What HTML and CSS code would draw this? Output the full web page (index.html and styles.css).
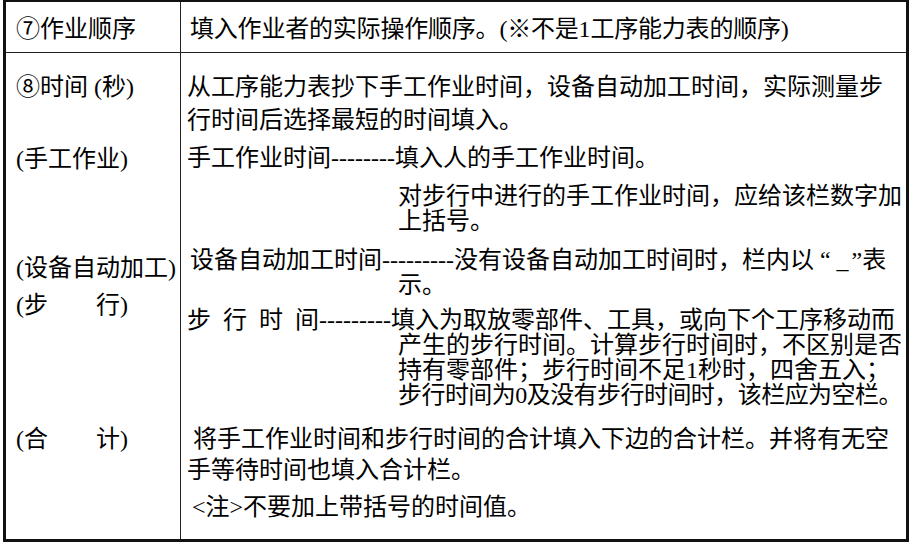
FILE: index.html
```html
<!DOCTYPE html>
<html lang="zh-CN">
<head>
<meta charset="utf-8">
<title>作业顺序 / 时间</title>
<link rel="stylesheet" href="styles.css">
</head>
<body>
<div class="sheet">
  <div class="cell cell-left head">
    <div class="label">⑦作业顺序</div>
  </div>
  <div class="cell cell-right head">
    <div class="head-text">填入作业者的实际操作顺序。(※不是1工序能力表的顺序)</div>
  </div>
  <div class="cell cell-left body-left">
    <div class="label l-time">⑧时间 (秒)</div>
    <div class="label l-manual">(手工作业)</div>
    <div class="label l-auto">(设备自动加工)</div>
    <div class="label l-walk">(步　　行)</div>
    <div class="label l-total">(合　　计)</div>
  </div>
  <div class="cell cell-right body-right">
    <p class="para p-intro">从工序能力表抄下手工作业时间，设备自动加工时间，实际测量步<br>行时间后选择最短的时间填入。</p>
    <p class="para p-manual">手工作业时间<span class="dash">--------</span>填入人的手工作业时间。</p>
    <p class="para p-bracket hang">对步行中进行的手工作业时间，应给该栏数字加<br>上括号。</p>
    <p class="para p-auto hang">设备自动加工时间<span class="dash">---------</span>没有设备自动加工时间时，栏内以 “<span class="us">_</span>”表<br>示。</p>
    <p class="para p-walk hang"><span class="spaced">步  行  时  间</span><span class="dash">---------</span>填入为取放零部件、工具，或向下个工序移动而<br>产生的步行时间。计算步行时间时，不区别是否<br>持有零部件；步行时间不足1秒时，四舍五入；<br><span class="tight">步行时间为0及没有步行时间时，该栏应为空栏。</span></p>
    <p class="para p-total">将手工作业时间和步行时间的合计填入下边的合计栏。并将有无空<br>手等待时间也填入合计栏。</p>
    <p class="para p-note">&lt;注&gt;不要加上带括号的时间值。</p>
  </div>
</div>
</body>
</html>
```
FILE: styles.css
```css
html, body {
  margin: 0;
  padding: 0;
  background: #ffffff;
}

body {
  font-family: "Liberation Serif", "Noto Sans CJK SC", serif;
  font-size: 24px;
  color: #000000;
}

.sheet {
  box-sizing: border-box;
  width: 906px;
  height: 543px;
  margin: -1px 0 0 3px;
  border: 3px solid #111111;
  display: grid;
  grid-template-columns: 175px 1fr;
  grid-template-rows: 51px 1fr;
}

.cell {
  box-sizing: border-box;
  white-space: nowrap;
  min-width: 0;
}

.cell-left {
  border-right: 1px solid #222222;
  padding-left: 10px;
}

.cell-right {
  padding-left: 6px;
}

.head {
  border-bottom: 1px solid #222222;
  padding-top: 11px;
}

.label,
.head-text {
  line-height: 32px;
}

.head-text {
  padding-left: 3px;
  letter-spacing: -0.2px;
}

.body-left {
  display: flex;
  flex-direction: column;
}

.l-time { margin-top: 18px; }
.l-manual { margin-top: 40px; }
.l-auto { margin-top: 77px; }
.l-walk { margin-top: 5px; }
.l-total { margin-top: 102px; }

.body-right {
  display: flex;
  flex-direction: column;
}

.para {
  margin: 0;
}

.spaced {
  white-space: pre;
}

.us {
  margin-left: 6px;
  margin-right: 3px;
}

.tight {
  letter-spacing: -0.55px;
}

.hang {
  padding-left: 211px;
  line-height: 25px;
}

.p-intro {
  margin-top: 18px;
  line-height: 33px;
}

.p-manual {
  margin-top: 5px;
  line-height: 32px;
}

.p-bracket {
  margin-top: 10px;
}

.p-auto {
  margin-top: 14px;
  text-indent: -208px;
}

.p-walk {
  margin-top: 10px;
  text-indent: -211px;
}

.p-total {
  margin-top: 16px;
  line-height: 31px;
  text-indent: 6px;
}

.p-note {
  margin-top: 5px;
  line-height: 32px;
  text-indent: 5px;
}
```
